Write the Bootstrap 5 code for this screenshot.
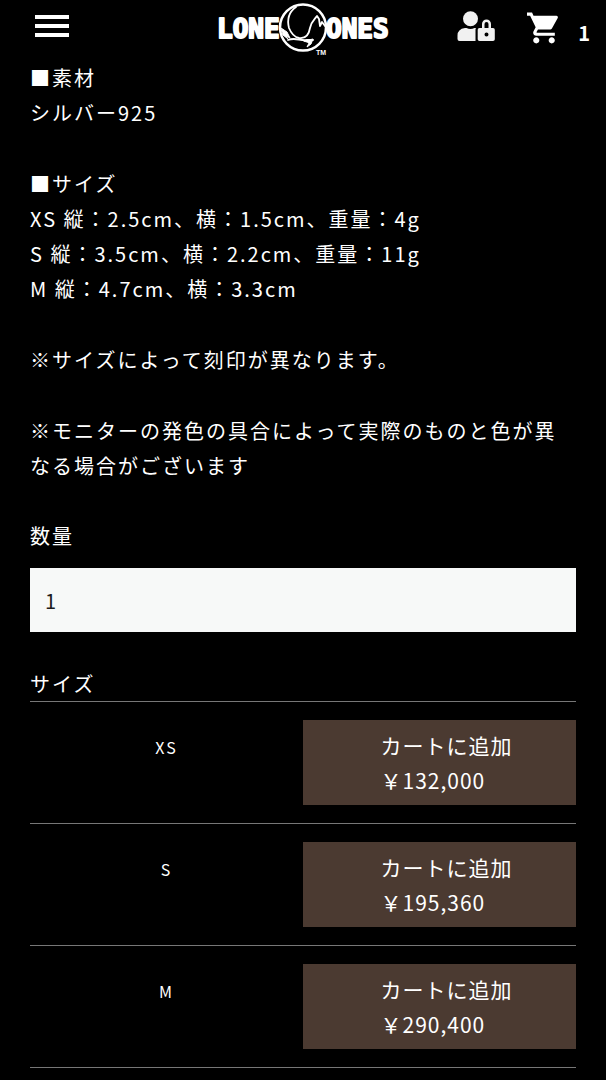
<!DOCTYPE html>
<html lang="ja">
<head>
<meta charset="utf-8">
<meta name="viewport" content="width=device-width, initial-scale=1">
<title>LONE ONES</title>
<link href="https://cdn.jsdelivr.net/npm/bootstrap@5.3.0/dist/css/bootstrap.min.css" rel="stylesheet">
<style>
  body {
    background: #000;
    color: #fff;
    font-family: "Noto Sans CJK JP", sans-serif;
    font-size: 20px;
    line-height: 35px;
    letter-spacing: 2px;
  }
  .site-header { height: 60px; padding: 0 16px 4px; background: #000; }
  .header-side { flex: 1 1 0; }
  .menu-button { margin-left: 14px; }
  .account-side { gap: 32px; }
  .icon-button { line-height: 0; color: #fff; background: none; border: 0; padding: 0; }
  .cart-link { gap: 17px; font-weight: 700; letter-spacing: 0; line-height: 24px; }
  .logo-word {
    font-family: "DejaVu Sans Mono", monospace; font-size: 26px; font-weight: 700;
    letter-spacing: 0; stroke: #fff; stroke-width: 2px; stroke-linejoin: round;
  }
  .logo-tm { font-family: "Liberation Sans", sans-serif; font-size: 7px; font-weight: 700; letter-spacing: 0; }
  .page-body { padding: 0 30px; }
  .product-text p { margin-bottom: 36px; }
  .product-text p:last-child { margin-bottom: 35px; }
  .qty-input, .qty-input:focus {
    height: 64px; padding: 0 15px; border: 0; border-radius: 0;
    background: #f7f9f8; color: #1c1c1c; font-size: 20px;
  }
  .qty-block { margin-bottom: 34px; }
  .qty-label { margin-bottom: 15px; }
  .size-title { font-size: 20px; line-height: 35px; font-weight: 400; }
  .variant { border-top: 1px solid #777; padding: 18px 0; }
  .variant:last-child { border-bottom: 1px solid #777; }
  .variant-name { font-size: 16px; padding-top: 10px; }
  .cart-button {
    height: 85px; border: 0; border-radius: 0; padding: 0 0 0 14px;
    background: #4b3a31; color: #fff; font-size: 21px; line-height: 35px; letter-spacing: 1px;
  }
  .cart-button:hover { background: #5a473d; color: #fff; }
</style>
</head>
<body>
<header class="site-header sticky-top d-flex align-items-center">
  <div class="header-side d-flex">
    <button class="icon-button menu-button" type="button" aria-label="メニュー">
      <svg width="42" height="28" viewBox="0 0 42 28" fill="currentColor"><path d="M5 1h34v4H5zM5 10h34v4H5zM5 19h34v4H5z"/></svg>
    </button>
  </div>
  <a href="#" class="d-flex" aria-label="LONE ONES">
    <svg width="174" height="56" viewBox="0 0 174 56" fill="#fff">
      <text class="logo-word" x="1" y="38">LONE</text>
      <text class="logo-word" x="110" y="38">ONES</text>
      <circle cx="87" cy="27.500" r="23" fill="#000" stroke="#fff" stroke-width="2.500"/>
      <g fill="none" stroke="#fff" stroke-width="1.800" stroke-linecap="round" stroke-linejoin="round">
        <path d="M80 7C73 12 71 20 73 28C75 33 78 37 83 38C90 39 93 34 94 28C95 22 98 20 101 16L103 19L104 26L106 22L109 26"/>
        <path fill="#fff" stroke-width="1" d="M65 28L71 32L74 38L70 36L72 39L67 35z"/>
        <path d="M72 40C79 37 84 41 91 40L97 40"/>
        <path fill="#fff" stroke-width="1" d="M88 41L97 39L95 44L91 47L93 43z"/>
      </g>
      <text class="logo-tm" x="100" y="55">TM</text>
    </svg>
  </a>
  <div class="header-side account-side d-flex justify-content-end align-items-center">
    <a href="#" class="icon-button" aria-label="ログイン">
      <svg width="38" height="34" viewBox="0 0 38 34" fill="#f1f1f1">
        <circle cx="13.500" cy="7.800" r="7.500"/>
        <path d="M8 17h1.500a9 9 0 0 0 8 0H19q-.5.600-.5 1.500V30H2.500Q.5 30 .5 28v-3.500Q.5 18 8 17z"/>
        <path fill-rule="evenodd" d="M22.500 17H25v-4a4.500 4.500 0 0 1 9 0v4h2q1.800 0 1.800 1.800v9.400Q37.800 30 36 30H22.500q-1.800 0-1.800-1.800v-9.400Q20.700 17 22.500 17zM27.500 17h4v-4a2 2 0 0 0-4 0zM29.500 21.500a2 2 0 1 0 0 4 2 2 0 0 0 0-4z"/>
      </svg>
    </a>
    <a href="#" class="cart-link d-flex align-items-end text-white text-decoration-none" aria-label="カート">
      <svg width="34" height="34" viewBox="1 1 22 22" fill="#fff"><path d="M7 18c-1.100 0-1.990.9-1.990 2S5.900 22 7 22s2-.9 2-2-.9-2-2-2zM1 2v2h2l3.600 7.590-1.350 2.450c-.16.280-.25.610-.25.960 0 1.100.9 2 2 2h12v-2H7.420c-.14 0-.25-.11-.25-.25l.03-.12.900-1.630h7.450c.75 0 1.410-.41 1.750-1.030l3.580-6.490A1 1 0 0 0 20 4H5.210l-.94-2H1zm16 16c-1.100 0-1.990.9-1.990 2s.89 2 1.990 2 2-.9 2-2-.9-2-2-2z"/></svg>
      <span>1</span>
    </a>
  </div>
</header>
<main class="page-body">
  <section class="product-text">
    <p>■素材<br>シルバー925</p>
    <p>■サイズ<br>XS 縦：2.5cm、横：1.5cm、重量：4g<br>S 縦：3.5cm、横：2.2cm、重量：11g<br>M 縦：4.7cm、横：3.3cm</p>
    <p>※サイズによって刻印が異なります。</p>
    <p>※モニターの発色の具合によって実際のものと色が異なる場合がございます</p>
  </section>
  <div class="qty-block">
    <label class="qty-label d-block" for="qty">数量</label>
    <input class="qty-input form-control" id="qty" type="text" inputmode="numeric" value="1">
  </div>
  <section>
    <h2 class="size-title m-0">サイズ</h2>
    <div class="variant row g-0">
      <div class="variant-name col-6 text-center">XS</div>
      <div class="col-6"><button class="cart-button btn w-100" type="button"><span class="d-inline-block text-start">カートに追加<br>￥132,000</span></button></div>
    </div>
    <div class="variant row g-0">
      <div class="variant-name col-6 text-center">S</div>
      <div class="col-6"><button class="cart-button btn w-100" type="button"><span class="d-inline-block text-start">カートに追加<br>￥195,360</span></button></div>
    </div>
    <div class="variant row g-0">
      <div class="variant-name col-6 text-center">M</div>
      <div class="col-6"><button class="cart-button btn w-100" type="button"><span class="d-inline-block text-start">カートに追加<br>￥290,400</span></button></div>
    </div>
  </section>
</main>
<script src="https://cdn.jsdelivr.net/npm/bootstrap@5.3.0/dist/js/bootstrap.bundle.min.js"></script>
</body>
</html>
